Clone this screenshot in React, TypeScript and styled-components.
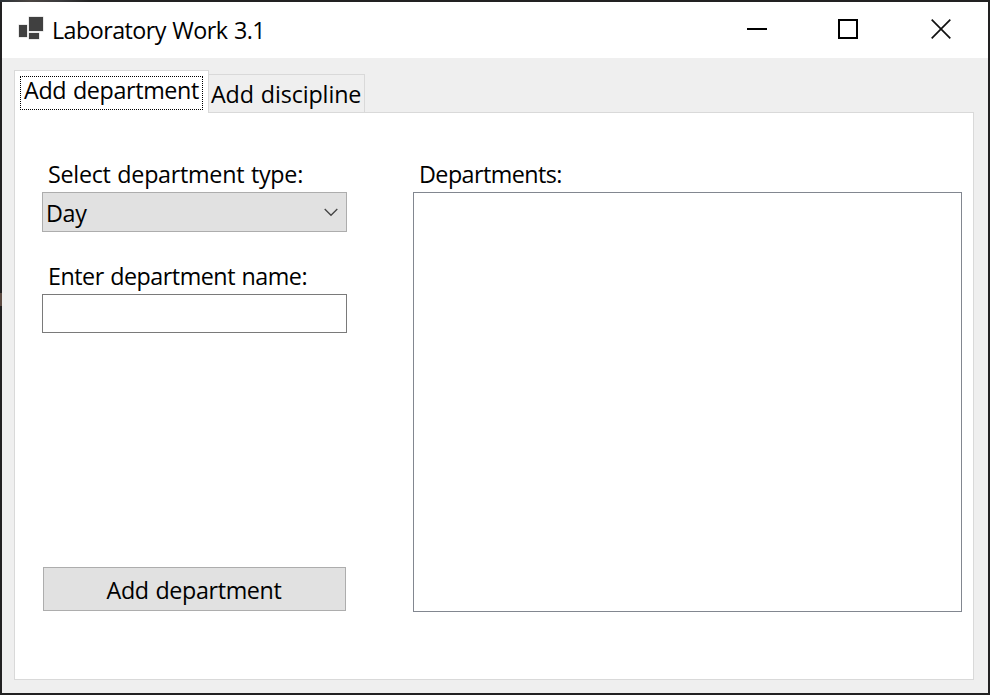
import React, { useState } from "react";
import styled, { createGlobalStyle } from "styled-components";

const GlobalStyle = createGlobalStyle`
  * { box-sizing: border-box; }
  body { margin: 0; overflow: hidden; }
`;

const Frame = styled.div`
  width: 990px;
  height: 695px;
  padding: 2px;
  background:
    linear-gradient(#5c4a42, #5c4a42) 0 293px / 2px 13px no-repeat,
    linear-gradient(90deg, #2b3238, #4a4441 30px, #3a3a3c 60px, #222 90px) 0 0 / 100px 2px no-repeat,
    #222122;
  font-family: "Open Sans", "Noto Sans", sans-serif;
  font-size: 23.3px;
  line-height: 32px;
  color: #000;
`;

const Window = styled.div`
  display: flex;
  flex-direction: column;
  height: 691px;
  background: #efefef;
`;

const Text = styled.span<{ $spacing?: number }>`
  display: block;
  white-space: nowrap;
  letter-spacing: ${(p) => p.$spacing ?? 0}px;
  word-spacing: 1px;
`;

const TitleBar = styled.header`
  display: flex;
  align-items: flex-start;
  height: 56px;
  padding: 12px 0 0 14px;
  background: #fff;
`;

const AppIcon = styled.svg`
  width: 30px;
  height: 28px;
  margin-right: 6px;
`;

const Caption = styled.h1`
  margin: 0;
  font: inherit;
`;

const WindowButtons = styled.div`
  display: flex;
  margin: 5px 36px 0 auto;
`;

const WindowButton = styled.button`
  width: 21px;
  height: 21px;
  padding: 0;
  border: 0;
  background: none;

  & + & { margin-left: 70px; }
  &:last-child { margin-left: 72px; }
  svg { display: block; }
`;

const Tabs = styled.nav`
  display: flex;
  align-items: flex-end;
  height: 54px;
  padding-left: 12px;
`;

const ActiveTab = styled.div`
  width: 195px;
  height: 43px;
  padding: 5px;
  margin-bottom: -1px;
  border: 1px solid #d9d9d9;
  border-bottom: 0;
  background: #fff;
  z-index: 1;
`;

const FocusBox = styled.div`
  width: 183px;
  height: 34px;
  padding-left: 3px;
  border: 1px dotted #000;
  line-height: 26px;
`;

const InactiveTab = styled.div`
  width: 156px;
  height: 38px;
  padding: 3px 0 0 2px;
  border: 1px solid #d9d9d9;
  border-width: 1px 1px 0 0;
  background: #efefef;
`;

const Page = styled.main`
  display: flex;
  gap: 66px;
  width: 960px;
  height: 568px;
  margin-left: 12px;
  padding: 45px 11px 0 27px;
  border: 1px solid #d9d9d9;
  background: #fff;
`;

const Form = styled.form`
  display: flex;
  flex-direction: column;
  width: 305px;
  height: 453px;
`;

const Label = styled.label`
  height: 34px;
  padding-left: 6px;
`;

const Select = styled.div`
  display: flex;
  justify-content: space-between;
  align-items: flex-start;
  height: 40px;
  margin-bottom: 28px;
  padding: 4px 8.5px 0 3px;
  border: 1px solid #adadad;
  background: #e1e1e1;

  svg { margin-top: 11px; }
`;

const Input = styled.input`
  width: 305px;
  height: 39px;
  padding: 2px 4px;
  border: 1px solid #7a7a7a;
  border-radius: 0;
  outline: none;
  background: #fff;
  font: inherit;
`;

const SubmitButton = styled.button`
  display: flex;
  justify-content: center;
  width: 303px;
  height: 44px;
  margin: auto 1px 0;
  padding: 6px 1px 0 0;
  border: 1px solid #adadad;
  background: #e1e1e1;
  color: #000;
  font: inherit;
`;

const Results = styled.section`
  width: 549px;
`;

const ListBox = styled.div`
  height: 420px;
  border: 1px solid #828790;
`;

export default function App() {
  const [name, setName] = useState("");

  return (
    <>
      <GlobalStyle />
      <Frame>
        <Window>
          <TitleBar>
            <AppIcon viewBox="0 0 30 28">
              <g fill="#404040" stroke="#d4d4d4" strokeWidth="1" paintOrder="stroke">
                <rect x="13" y="3" width="14" height="14" />
                <rect x="3" y="11" width="8" height="12" />
                <rect x="13" y="19" width="10" height="6" />
              </g>
            </AppIcon>
            <Caption><Text $spacing={-0.55}>Laboratory Work 3.1</Text></Caption>
            <WindowButtons>
              <WindowButton aria-label="Minimize">
                <svg width="21" height="21"><path d="M0 10h20" stroke="#000" strokeWidth="2" /></svg>
              </WindowButton>
              <WindowButton aria-label="Maximize">
                <svg width="21" height="21"><path d="M1 1h18v18H1z" fill="none" stroke="#000" strokeWidth="2" /></svg>
              </WindowButton>
              <WindowButton aria-label="Close">
                <svg width="21" height="21"><path d="M.7.7l18.6 18.6M19.3.7L.7 19.3" stroke="#111" strokeWidth="1.7" /></svg>
              </WindowButton>
            </WindowButtons>
          </TitleBar>
          <Tabs>
            <ActiveTab><FocusBox><Text $spacing={-0.35}>Add department</Text></FocusBox></ActiveTab>
            <InactiveTab><Text $spacing={-0.12}>Add discipline</Text></InactiveTab>
          </Tabs>
          <Page>
            <Form onSubmit={(e) => e.preventDefault()}>
              <Label><Text $spacing={-0.28}>Select department type:</Text></Label>
              <Select>
                <Text $spacing={-0.3}>Day</Text>
                <svg width="14" height="9"><path d="M.7 1l6.3 6.3L13.3 1" fill="none" stroke="#444" strokeWidth="1.3" /></svg>
              </Select>
              <Label htmlFor="name"><Text $spacing={-0.49}>Enter department name:</Text></Label>
              <Input id="name" value={name} onChange={(e) => setName(e.target.value)} />
              <SubmitButton><Text $spacing={-0.35}>Add department</Text></SubmitButton>
            </Form>
            <Results>
              <Label as="div"><Text $spacing={-0.55}>Departments:</Text></Label>
              <ListBox />
            </Results>
          </Page>
        </Window>
      </Frame>
    </>
  );
}
